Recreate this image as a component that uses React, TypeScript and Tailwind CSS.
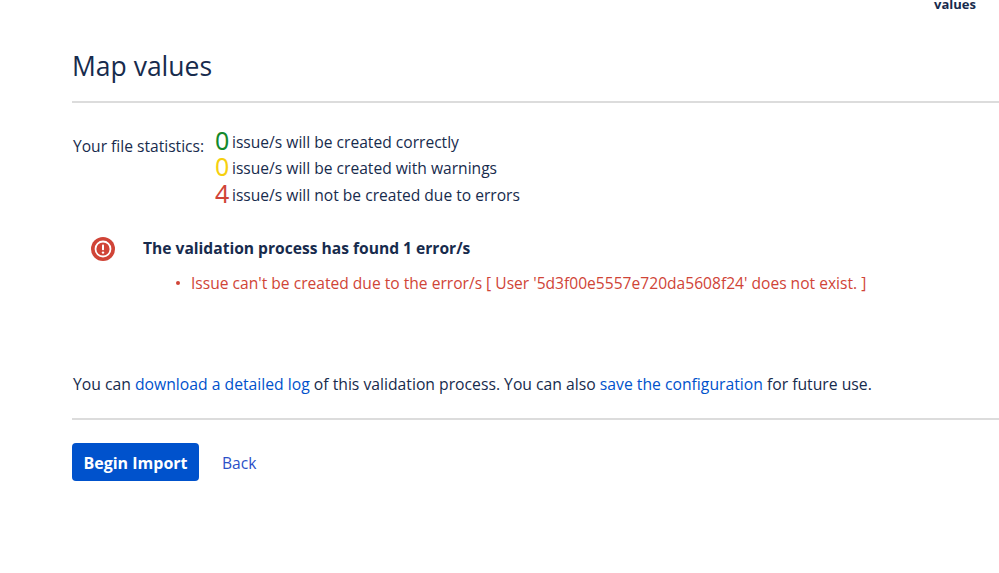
const stats = [
  { n: "0", color: "text-[#14892c]", text: "issue/s will be created correctly" },
  { n: "0", color: "text-[#f6d00f]", text: "issue/s will be created with warnings" },
  { n: "4", color: "text-[#d04437]", text: "issue/s will not be created due to errors" },
]

export default function App() {
  return (
    <div className="relative h-[573px] w-[999px] overflow-hidden bg-white font-['Open_Sans','Noto_Sans',sans-serif] text-[15.6px] text-[#172b4d]">
      <div className="absolute right-[23px] top-[-4px] text-[13px] font-bold leading-[16px]">values</div>

      <div className="pl-[72px]">
        <h1 className="pt-[47px] text-[26.5px] font-normal leading-[38px]">Map values</h1>
        <hr className="mt-[16px] border-t-2 border-[#dcdcdc]" />

        <div className="mt-[26px] flex items-start">
          <div className="w-[143px] pl-[1px] pt-[5px] leading-[24px]">Your file statistics:</div>
          <div className="flex flex-col">
            {stats.map((s) => (
              <div key={s.text} className="flex h-[26.5px] items-center">
                <span className={`w-[16px] pb-[5px] font-['Noto_Sans',sans-serif] text-[25px] leading-[20px] ${s.color}`}>{s.n}</span>
                <span className="ml-[1px]">{s.text}</span>
              </div>
            ))}
          </div>
        </div>

        <div className="mt-[28px] flex items-center pl-[19px]">
          <svg width="24" height="24" viewBox="0 0 24 24">
            <circle cx="12" cy="12" r="12" fill="#d04437" />
            <circle cx="12" cy="12" r="8.4" fill="#fff" />
            <circle cx="12" cy="12" r="6.6" fill="#d04437" />
            <rect x="11" y="7.4" width="2" height="5.8" rx="0.8" fill="#fff" />
            <circle cx="12" cy="15.6" r="1.2" fill="#fff" />
          </svg>
          <span className="ml-[28px] font-bold">The validation process has found 1 error/s</span>
        </div>

        <ul className="mt-[11px] pl-[104px] text-[#d04437]">
          <li className="flex items-center">
            <span className="mr-[11px] h-[4px] w-[4px] rounded-full bg-[#d04437]" />
            Issue can't be created due to the error/s [ User '5d3f00e5557e720da5608f24' does not exist. ]
          </li>
        </ul>

        <p className="mt-[77px] pl-[1px] text-[15.72px] leading-[24px]">
          You can <a className="text-[#0052cc]">download a detailed log</a> of this validation process. You can also{" "}
          <a className="text-[#0052cc]">save the configuration</a> for future use.
        </p>
        <hr className="mt-[22px] border-t-2 border-[#dcdcdc]" />

        <div className="mt-[23px] flex items-center">
          <button className="h-[38px] w-[127px] rounded-[4px] bg-[#0052cc] pt-[2px] text-[16px] font-bold text-white">Begin Import</button>
          <a className="ml-[23px] pt-[4px] text-[#2b50c8]">Back</a>
        </div>
      </div>
    </div>
  )
}
